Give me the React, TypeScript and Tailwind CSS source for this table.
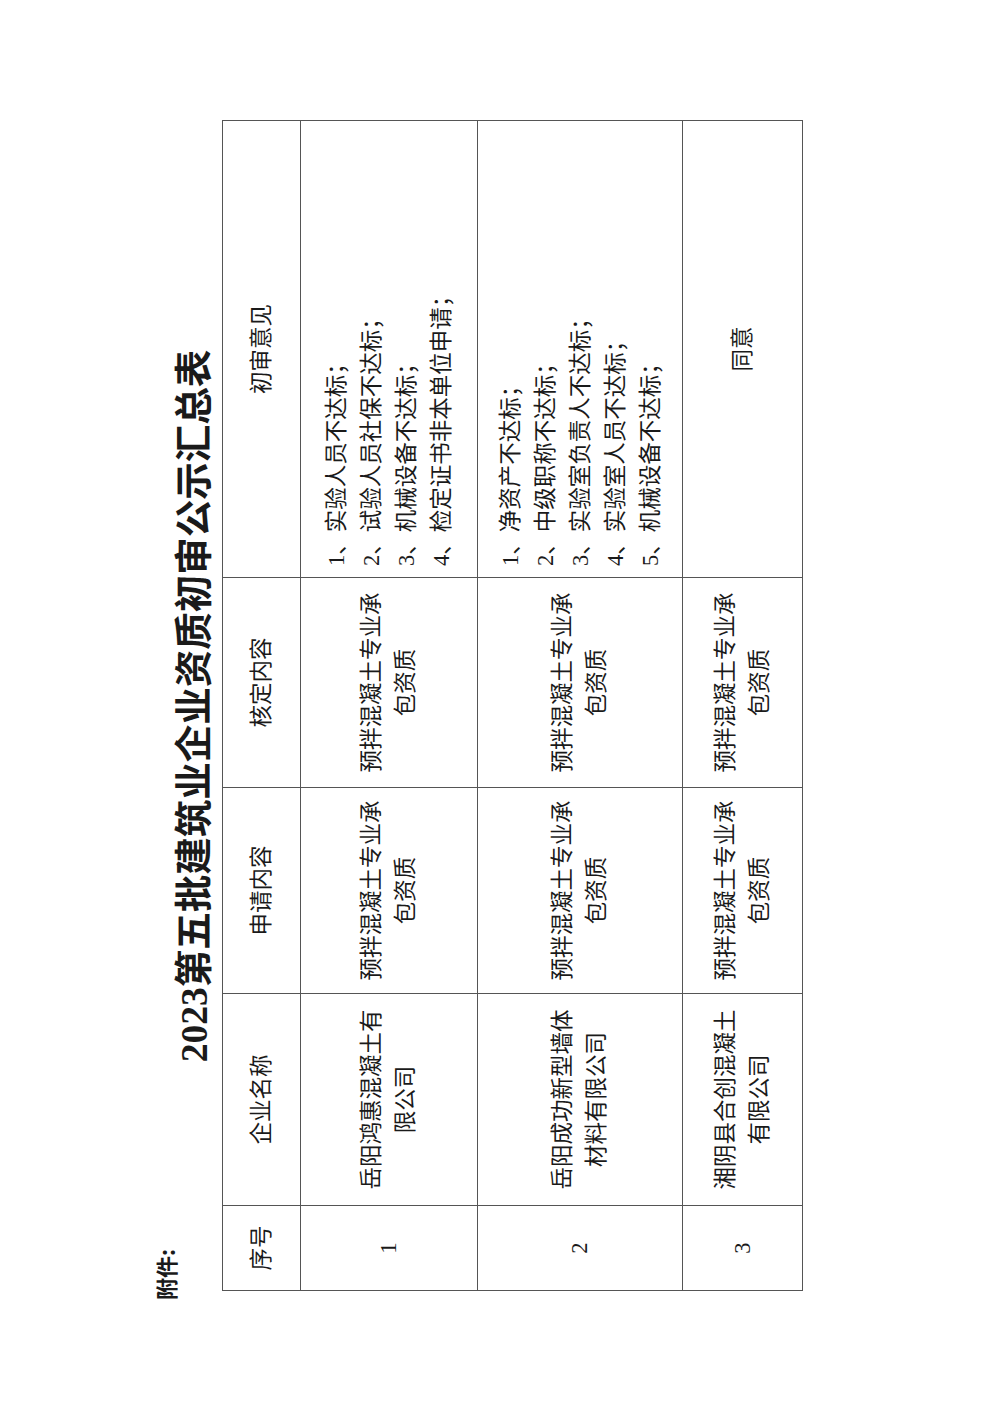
import React from "react";

type Row = {
  no: string;
  company: string;
  apply: string;
  approve: string;
  opinions: string[];
  height: string;
};

const rows: Row[] = [
  {
    no: "1",
    company: "岳阳鸿惠混凝土有限公司",
    apply: "预拌混凝土专业承包资质",
    approve: "预拌混凝土专业承包资质",
    opinions: [
      "1、实验人员不达标；",
      "2、试验人员社保不达标；",
      "3、机械设备不达标；",
      "4、检定证书非本单位申请；",
    ],
    height: "h-[177px]",
  },
  {
    no: "2",
    company: "岳阳成功新型墙体材料有限公司",
    apply: "预拌混凝土专业承包资质",
    approve: "预拌混凝土专业承包资质",
    opinions: [
      "1、净资产不达标；",
      "2、中级职称不达标；",
      "3、实验室负责人不达标；",
      "4、实验室人员不达标；",
      "5、机械设备不达标；",
    ],
    height: "h-[205px]",
  },
  {
    no: "3",
    company: "湘阴县合创混凝土有限公司",
    apply: "预拌混凝土专业承包资质",
    approve: "预拌混凝土专业承包资质",
    opinions: ["同意"],
    height: "h-[120px]",
  },
];

const cell = "border border-[#555] align-middle";

export default function App() {
  return (
    <div className="w-[1000px] h-[1414px] overflow-hidden bg-white">
      {/* landscape sheet, scanned sideways */}
      <div className="w-[1414px] h-[1000px] origin-top-left -rotate-90 translate-y-[1414px] bg-white text-[#1a1a1a] font-['Liberation_Serif','Noto_Sans_CJK_SC',serif]">
        <div className="pt-[152px] pl-[123px]">
          <div className="h-[26px] -ml-[9px] text-[22px] leading-[26px] font-bold font-['Noto_Sans_CJK_SC',sans-serif]">
            附件:
          </div>
          <div className="w-[1170px] h-[34px] text-center text-[37.5px] leading-[34px] font-bold">
            2023第五批建筑业企业资质初审公示汇总表
          </div>
          <table className="mt-[10px] w-[1170px] table-fixed border-collapse text-[22.5px]">
            <colgroup>
              <col className="w-[85px]" />
              <col className="w-[212px]" />
              <col className="w-[206px]" />
              <col className="w-[210px]" />
              <col className="w-[457px]" />
            </colgroup>
            <thead>
              <tr className="h-[78px] text-center">
                <th className={`${cell} font-normal`}>序号</th>
                <th className={`${cell} font-normal`}>企业名称</th>
                <th className={`${cell} font-normal`}>申请内容</th>
                <th className={`${cell} font-normal`}>核定内容</th>
                <th className={`${cell} font-normal`}>初审意见</th>
              </tr>
            </thead>
            <tbody>
              {rows.map((r) => (
                <tr key={r.no} className={r.height}>
                  <td className={`${cell} text-center`}>{r.no}</td>
                  <td className={`${cell} px-[12px] text-center leading-[34px]`}>
                    {r.company}
                  </td>
                  <td className={`${cell} px-[10px] text-center leading-[34px]`}>
                    {r.apply}
                  </td>
                  <td className={`${cell} px-[12px] text-center leading-[34px]`}>
                    {r.approve}
                  </td>
                  {r.opinions.length > 1 ? (
                    <td className={`${cell} pl-[11px] text-left leading-[35px]`}>
                      {r.opinions.map((o) => (
                        <div key={o}>{o}</div>
                      ))}
                    </td>
                  ) : (
                    <td className={`${cell} text-center`}>{r.opinions[0]}</td>
                  )}
                </tr>
              ))}
            </tbody>
          </table>
        </div>
      </div>
    </div>
  );
}
